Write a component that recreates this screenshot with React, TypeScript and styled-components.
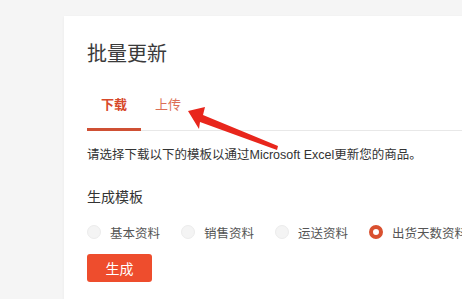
import styled, { createGlobalStyle } from "styled-components";

const GlobalStyle = createGlobalStyle`
  html, body {
    margin: 0;
    padding: 0;
    background: #f5f5f5;
    overflow: hidden;
  }
  body {
    font-family: "Liberation Sans", "Noto Sans CJK SC", sans-serif;
    color: #333;
  }
`;

const options = ["基本资料", "销售资料", "运送资料", "出货天数资料"];

function App() {
  return (
    <>
      <GlobalStyle />
      <Page>
        <Card>
          <Title>批量更新</Title>
          <Tabs>
            <Tab $active>下载</Tab>
            <Tab>上传</Tab>
          </Tabs>
          <Desc>请选择下载以下的模板以通过Microsoft Excel更新您的商品。</Desc>
          <Label>生成模板</Label>
          <RadioRow>
            {options.map((o, i) => (
              <RadioItem key={o}>
                <RadioDot $checked={i === 3} />
                <span>{o}</span>
              </RadioItem>
            ))}
          </RadioRow>
          <Button>生成</Button>
        </Card>
        <Arrow width="462" height="299" viewBox="0 0 462 299">
          <polygon
            points="188,111 205,107 203,115 278,146 277,150 200,122 199,129"
            fill="#e8261c"
          />
        </Arrow>
      </Page>
    </>
  );
}

export default App;

const Page = styled.div`
  position: relative;
  width: 462px;
  height: 299px;
  overflow: hidden;
`;

const Card = styled.div`
  margin: 16px 0 0 64px;
  width: 460px;
  height: 320px;
  background: #fff;
  box-shadow: 0 1px 3px rgba(0, 0, 0, 0.05);
  padding: 24px 0 0 23px;
  box-sizing: border-box;
`;

const Title = styled.div`
  font-size: 20px;
  line-height: 28px;
  color: #3a3a3a;
`;

const Tabs = styled.div`
  display: flex;
  margin-top: 18px;
  border-bottom: 1px solid #e8e8e8;
`;

const Tab = styled.div<{ $active?: boolean }>`
  padding: 10px 14px 14px;
  line-height: 18px;
  font-size: 13px;
  font-weight: ${(p) => (p.$active ? "bold" : "normal")};
  color: ${(p) => (p.$active ? "#d7492b" : "#db6f57")};
  border-bottom: 3px solid ${(p) => (p.$active ? "#cf5034" : "transparent")};
  margin-bottom: -1px;
`;

const Desc = styled.div`
  margin-top: 16px;
  font-size: 12.5px;
  line-height: 16px;
  color: #333;
  white-space: nowrap;
`;

const Label = styled.div`
  margin-top: 24px;
  font-size: 14px;
  line-height: 20px;
  color: #333;
`;

const RadioRow = styled.div`
  display: flex;
  gap: 21px;
  margin-top: 15px;
  height: 20px;
  align-items: center;
`;

const RadioItem = styled.label`
  display: flex;
  align-items: center;
  gap: 9px;
  font-size: 12.5px;
  color: #555;
  white-space: nowrap;
`;

const RadioDot = styled.span<{ $checked?: boolean }>`
  width: 14px;
  height: 14px;
  border-radius: 50%;
  box-sizing: border-box;
  background: ${(p) => (p.$checked ? "#fff" : "#f4f4f4")};
  border: ${(p) => (p.$checked ? "4.5px solid #d9502f" : "1px solid #ececec")};
  flex: none;
`;

const Button = styled.button`
  margin-top: 12px;
  width: 65px;
  height: 28px;
  border: none;
  border-radius: 3px;
  background: #ee4d2d;
  color: #fff;
  font-size: 14px;
  font-family: inherit;
  padding: 0;
`;

const Arrow = styled.svg`
  position: absolute;
  left: 0;
  top: 0;
  pointer-events: none;
`;
